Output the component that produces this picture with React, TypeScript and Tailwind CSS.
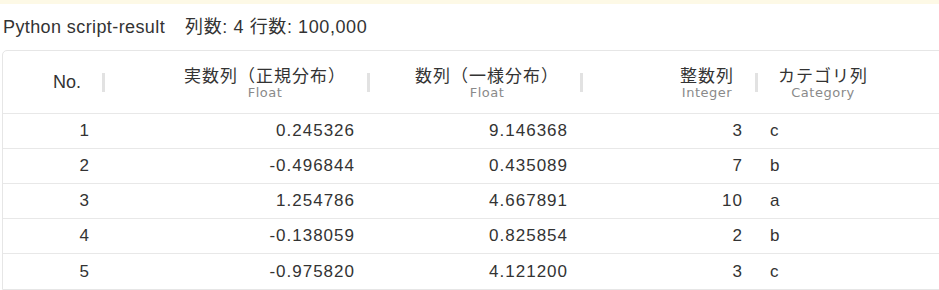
import { Fragment } from 'react';

type Column = {
  title: string;
  sub?: string;
  align: 'right' | 'left';
};

const columns: Column[] = [
  { title: 'No.', align: 'right' },
  { title: '実数列（正規分布）', sub: 'Float', align: 'right' },
  { title: '数列（一様分布）', sub: 'Float', align: 'right' },
  { title: '整数列', sub: 'Integer', align: 'right' },
  { title: 'カテゴリ列', sub: 'Category', align: 'left' },
];

const rows = [
  ['1', '0.245326', '9.146368', '3', 'c'],
  ['2', '-0.496844', '0.435089', '7', 'b'],
  ['3', '1.254786', '4.667891', '10', 'a'],
  ['4', '-0.138059', '0.825854', '2', 'b'],
  ['5', '-0.975820', '4.121200', '3', 'c'],
];

const grid = 'grid grid-cols-[102px_265px_213px_175px_1fr]';
const sans = "font-['Liberation_Sans','Noto_Sans_CJK_JP',sans-serif]";
const cjk = "font-['Noto_Sans_CJK_JP',sans-serif]";

// 見出しセル右端の区切り線
const Divider = () => <span className="ml-[21px] h-[19px] w-[3px] shrink-0 bg-[#e2e2e2]" />;

export default function App() {
  return (
    <div className="h-[290px] w-[939px] overflow-hidden bg-white text-[#333]">
      <div className="h-[4px] bg-[#fdf9e6]" />

      <div className={`flex h-[46px] items-center pl-[3px] text-[18px] tracking-[0.4px] ${sans}`}>
        <span>Python script-result</span>
        <span className="ml-[20px] tracking-[0.6px]">列数: 4 行数: 100,000</span>
      </div>

      <div className="ml-[2px] w-[1000px] rounded-tl-[5px] border border-[#e6e6e6]">
        {/* ヘッダー */}
        <div className={`${grid} h-[63px] border-b border-[#e8e8e8]`}>
          {columns.map((col, i) => {
            const last = i === columns.length - 1;
            return (
              <div
                key={col.title}
                className={`flex items-center ${last ? 'justify-start pl-[20px]' : 'justify-end'}`}
              >
                {col.sub ? (
                  <div className="flex flex-col items-center">
                    <span className={`text-[17px] leading-[22px] tracking-[1px] ${cjk}`}>
                      {col.title}
                    </span>
                    <span className="font-['DejaVu_Sans',sans-serif] text-[13px] leading-[14px] tracking-[0.5px] text-[#8a8a8a]">
                      {col.sub}
                    </span>
                  </div>
                ) : (
                  <span className={`text-[18px] ${sans}`}>{col.title}</span>
                )}
                {!last && <Divider />}
              </div>
            );
          })}
        </div>

        {/* データ行 */}
        {rows.map((row, r) => (
          <div
            key={r}
            className={`${grid} h-[35px] ${r < rows.length - 1 ? 'border-b border-[#e8e8e8]' : ''}`}
          >
            {row.map((v, c) => (
              <Fragment key={c}>
                <div
                  className={`flex items-center text-[17px] tracking-[1px] ${sans} ${
                    columns[c].align === 'left' ? 'justify-start pl-[12px]' : 'justify-end pr-[15px]'
                  }`}
                >
                  {v}
                </div>
              </Fragment>
            ))}
          </div>
        ))}
      </div>
    </div>
  );
}
